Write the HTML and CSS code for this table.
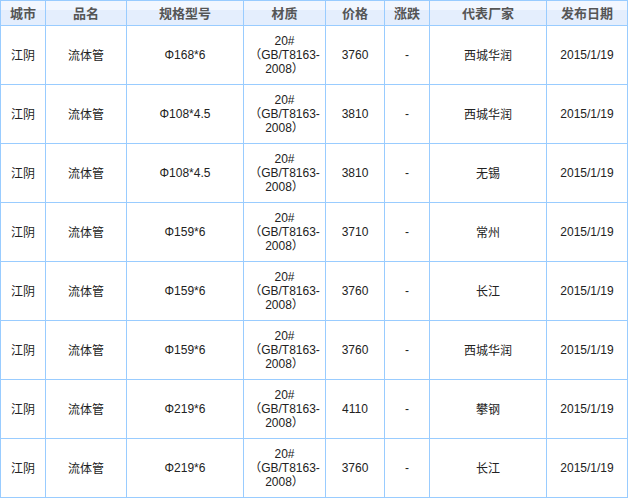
FILE: index.html
```html
<!DOCTYPE html>
<html lang="zh">
<head>
<meta charset="utf-8">
<title>流体管价格</title>
<link rel="stylesheet" href="styles.css">
</head>
<body>
<table class="price-table">
  <thead>
    <tr>
      <th class="c1">城市</th>
      <th class="c2">品名</th>
      <th class="c3">规格型号</th>
      <th class="c4">材质</th>
      <th class="c5">价格</th>
      <th class="c6">涨跌</th>
      <th class="c7">代表厂家</th>
      <th class="c8">发布日期</th>
    </tr>
  </thead>
  <tbody>
    <tr><td>江阴</td><td>流体管</td><td class="num">Φ168*6</td><td class="mat">20#<br>（GB/T8163-<br>2008）</td><td class="num">3760</td><td class="num">-</td><td>西城华润</td><td class="num">2015/1/19</td></tr>
    <tr><td>江阴</td><td>流体管</td><td class="num">Φ108*4.5</td><td class="mat">20#<br>（GB/T8163-<br>2008）</td><td class="num">3810</td><td class="num">-</td><td>西城华润</td><td class="num">2015/1/19</td></tr>
    <tr><td>江阴</td><td>流体管</td><td class="num">Φ108*4.5</td><td class="mat">20#<br>（GB/T8163-<br>2008）</td><td class="num">3810</td><td class="num">-</td><td>无锡</td><td class="num">2015/1/19</td></tr>
    <tr><td>江阴</td><td>流体管</td><td class="num">Φ159*6</td><td class="mat">20#<br>（GB/T8163-<br>2008）</td><td class="num">3710</td><td class="num">-</td><td>常州</td><td class="num">2015/1/19</td></tr>
    <tr><td>江阴</td><td>流体管</td><td class="num">Φ159*6</td><td class="mat">20#<br>（GB/T8163-<br>2008）</td><td class="num">3760</td><td class="num">-</td><td>长江</td><td class="num">2015/1/19</td></tr>
    <tr><td>江阴</td><td>流体管</td><td class="num">Φ159*6</td><td class="mat">20#<br>（GB/T8163-<br>2008）</td><td class="num">3760</td><td class="num">-</td><td>西城华润</td><td class="num">2015/1/19</td></tr>
    <tr><td>江阴</td><td>流体管</td><td class="num">Φ219*6</td><td class="mat">20#<br>（GB/T8163-<br>2008）</td><td class="num">4110</td><td class="num">-</td><td>攀钢</td><td class="num">2015/1/19</td></tr>
    <tr><td>江阴</td><td>流体管</td><td class="num">Φ219*6</td><td class="mat">20#<br>（GB/T8163-<br>2008）</td><td class="num">3760</td><td class="num">-</td><td>长江</td><td class="num">2015/1/19</td></tr>
  </tbody>
</table>
</body>
</html>
```

FILE: styles.css
```css
html, body {
  margin: 0;
  padding: 0;
  background: #ffffff;
}

.price-table {
  table-layout: fixed;
  width: 628px;
  border-collapse: separate;
  border-spacing: 0;
  border-left: 1px solid #99ccff;
  border-top: 1px solid #99ccff;
  font-family: "Liberation Sans", "Noto Sans CJK SC", sans-serif;
  font-size: 12px;
  color: #333333;
}

.price-table th,
.price-table td {
  padding: 0;
  border-right: 1px solid #99ccff;
  border-bottom: 1px solid #99ccff;
  text-align: center;
  vertical-align: middle;
  overflow: hidden;
  white-space: nowrap;
}

.price-table th {
  height: 24px;
  font-family: "Noto Sans CJK SC", sans-serif;
  font-size: 13px;
  font-weight: bold;
  color: #555555;
  line-height: 24px;
  background: linear-gradient(#f2f7ff 0, #f2f7ff 9px, #e4eefd 9px, #e4eefd 100%);
}

.price-table .c1 { width: 44px; }
.price-table .c2 { width: 80px; }
.price-table .c3 { width: 116px; }
.price-table .c4 { width: 81px; }
.price-table .c5 { width: 58px; }
.price-table .c6 { width: 44px; }
.price-table .c7 { width: 116px; }
.price-table .c8 { width: 80px; }

.price-table td {
  height: 58px;
  line-height: 14px;
  font-family: "Noto Sans CJK SC", sans-serif;
  color: #222222;
}

.price-table td.num,
.price-table td.mat {
  font-family: "Liberation Sans", "Noto Sans CJK SC", sans-serif;
}
```
